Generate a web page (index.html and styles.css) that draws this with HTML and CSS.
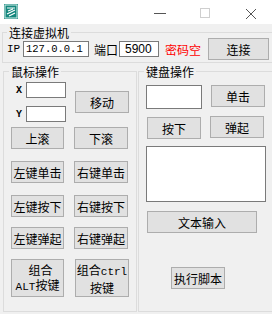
FILE: index.html
```html
<!DOCTYPE html>
<html lang="zh-CN">
<head>
    <meta charset="UTF-8">
    <title>连接虚拟机</title>
    <link rel="stylesheet" href="styles.css">
</head>
<body>
    <div class="window">
        <!-- Title bar -->
        <div class="titlebar">
            <svg class="app-icon" width="14" height="15" viewBox="0 0 14 15">
                <rect x="0" y="0" width="14" height="15" fill="#14877d"/>
                <rect x="1" y="1" width="12" height="13" fill="none" stroke="#d8f0ec" stroke-width="1"/>
                <path d="M3 4 H11 M4 7 L9 5 M3 10 L11 6 M5 12 L11 9" stroke="#ffffff" stroke-width="1.2" fill="none"/>
            </svg>
            <div class="controls">
                <svg class="ctl" width="46" height="24" viewBox="0 0 46 24">
                    <path d="M18 13.5 H30" stroke="#555" stroke-width="1"/>
                </svg>
                <svg class="ctl" width="46" height="24" viewBox="0 0 46 24">
                    <rect x="18.5" y="8.5" width="9" height="9" fill="none" stroke="#cfcfcf" stroke-width="1"/>
                </svg>
                <svg class="ctl" width="46" height="24" viewBox="0 0 46 24">
                    <path d="M18 9 L28 19 M28 9 L18 19" stroke="#555" stroke-width="1"/>
                </svg>
            </div>
        </div>

        <div class="client">
            <!-- Connection -->
            <fieldset class="group connect">
                <legend>连接虚拟机</legend>
                <div class="conn-row">
                    <span class="mono ip-lbl">IP</span>
                    <input class="field ip" type="text" value="127.0.0.1">
                    <span class="port-lbl">端口</span>
                    <input class="field port" type="text" value="5900">
                    <span class="warn">密码空</span>
                    <button class="btn connect-btn">连接</button>
                </div>
            </fieldset>

            <div class="panes">
                <!-- Mouse -->
                <fieldset class="group mouse">
                    <legend>鼠标操作</legend>
                    <div class="xy-block">
                        <div class="xy-fields">
                            <div class="xy-row"><span class="mono xy-lbl">X</span><input class="field xy" type="text"></div>
                            <div class="xy-row"><span class="mono xy-lbl">Y</span><input class="field xy" type="text"></div>
                        </div>
                        <button class="btn move-btn">移动</button>
                    </div>
                    <div class="pair first">
                        <button class="btn">上滚</button>
                        <button class="btn">下滚</button>
                    </div>
                    <div class="pair">
                        <button class="btn">左键单击</button>
                        <button class="btn">右键单击</button>
                    </div>
                    <div class="pair">
                        <button class="btn">左键按下</button>
                        <button class="btn">右键按下</button>
                    </div>
                    <div class="pair tight">
                        <button class="btn">左键弹起</button>
                        <button class="btn">右键弹起</button>
                    </div>
                    <div class="pair tight">
                        <button class="btn tall"><span class="line indent">组合</span><span class="line"><span class="mono">ALT</span>按键</span></button>
                        <button class="btn tall shift"><span class="line">组合<span class="mono">ctrl</span></span><span class="line">按键</span></button>
                    </div>
                </fieldset>

                <!-- Keyboard -->
                <fieldset class="group keyboard">
                    <legend>键盘操作</legend>
                    <div class="kb-row">
                        <input class="field key" type="text">
                        <button class="btn click-btn">单击</button>
                    </div>
                    <div class="kb-row second">
                        <button class="btn down-btn">按下</button>
                        <button class="btn up-btn">弹起</button>
                    </div>
                    <textarea class="field text-box"></textarea>
                    <button class="btn text-btn">文本输入</button>
                    <button class="btn script-btn">执行脚本</button>
                </fieldset>
            </div>
        </div>
    </div>
</body>
</html>
```

FILE: styles.css
```css
* {
    box-sizing: border-box;
}

body {
    margin: 0;
    background: #ffffff;
    font: 12px/13px "Noto Sans CJK SC", sans-serif;
    color: #000000;
}

.window {
    width: 272px;
    height: 314px;
    overflow: hidden;
    background: #f0f0f0;
    display: flex;
    flex-direction: column;
}

/* Title bar */
.titlebar {
    height: 24px;
    flex-shrink: 0;
    background: #ffffff;
    display: flex;
    align-items: flex-start;
}

.app-icon {
    margin: 4px 0 0 4px;
}

.controls {
    margin-left: auto;
    margin-right: -2px;
    display: flex;
}

.ctl {
    display: block;
}

/* Group boxes */
.group {
    margin: 0;
    padding: 0;
    border: 1px solid #dcdcdc;
    min-width: 0;
}

.group legend {
    padding: 0 2px;
    margin-left: 5px;
    font: 12px/13px "Noto Sans CJK SC", sans-serif;
}

.mono {
    font-family: "Liberation Mono", monospace;
}

/* Common controls */
.btn {
    display: block;
    height: 22px;
    padding: 0;
    background: #e1e1e1;
    border: 1px solid #adadad;
    border-radius: 0;
    font: 12px/13px "Noto Sans CJK SC", sans-serif;
    letter-spacing: 0;
    white-space: nowrap;
    color: #000000;
}

.btn .mono {
    font-size: 11px;
}

.btn .line {
    display: block;
    line-height: 15px;
}

.btn .indent {
    padding-left: 6px;
}

.field {
    display: block;
    height: 16px;
    margin: 0;
    padding: 0 2px;
    background: #ffffff;
    border: 1px solid #7a7a7a;
    border-radius: 0;
    font: 11px/14px "Liberation Mono", monospace;
    color: #000000;
    outline: none;
}

/* Connection row */
.connect {
    margin: 2px -10px 0 2px;
    padding-bottom: 2px;
}

.connect legend {
    margin-left: 4px;
}

.conn-row {
    display: flex;
    align-items: center;
    height: 22px;
    margin-top: -1px;
}

.ip-lbl {
    margin-left: 4px;
    width: 16px;
    font-size: 11px;
}

.field.ip {
    width: 66px;
    font-size: 10.5px;
}

.port-lbl {
    margin-left: 5px;
    width: 25px;
}

.field.port {
    width: 40px;
    padding-left: 5px;
    font: 12px/14px "Liberation Sans", sans-serif;
}

.warn {
    margin-left: 6px;
    color: #ff0000;
    width: 37px;
}

.connect-btn {
    width: 61px;
    margin-left: 6px;
}

/* Lower panes */
.panes {
    display: flex;
    margin-top: 2px;
}

.mouse {
    width: 134px;
    height: 247px;
    margin-left: 3px;
    flex-shrink: 0;
}

.keyboard {
    width: 150px;
    height: 247px;
    margin-left: 1px;
    flex-shrink: 0;
}

/* Mouse group */
.xy-block {
    display: flex;
    align-items: center;
    margin-top: 4px;
}

.xy-fields {
    display: flex;
    flex-direction: column;
    gap: 8px;
}

.xy-row {
    display: flex;
    align-items: center;
}

.xy-lbl {
    width: 10px;
    margin-left: 12px;
    font-size: 10px;
    font-weight: bold;
}

.field.xy {
    width: 40px;
}

.move-btn {
    width: 54px;
    margin-left: 9px;
}

.pair {
    display: flex;
    gap: 10px;
    margin-top: 12px;
    padding-left: 7px;
}

.pair.first {
    margin-top: 5px;
}

.pair.tight {
    margin-top: 10px;
}

.pair .btn {
    width: 53px;
    flex-shrink: 0;
}

.pair .btn + .btn {
    width: 54px;
}

.btn.tall {
    height: 38px;
}

.btn.shift {
    margin-left: 1px;
}

/* Keyboard group */
.kb-row {
    display: flex;
    align-items: flex-start;
    margin-top: 7px;
    padding-left: 7px;
}

.field.key {
    width: 56px;
    height: 24px;
}

.click-btn {
    width: 54px;
    margin-left: 9px;
}

.kb-row.second {
    margin-top: 8px;
}

.down-btn {
    width: 54px;
    margin-left: 1px;
}

.up-btn {
    width: 54px;
    margin-left: 9px;
    margin-top: -1px;
}

.text-box {
    width: 120px;
    height: 56px;
    margin: 7px 0 0 7px;
    resize: none;
}

.text-btn {
    width: 110px;
    margin: 9px 0 0 8px;
}

.script-btn {
    width: 54px;
    margin: 34px 0 0 32px;
}
```
